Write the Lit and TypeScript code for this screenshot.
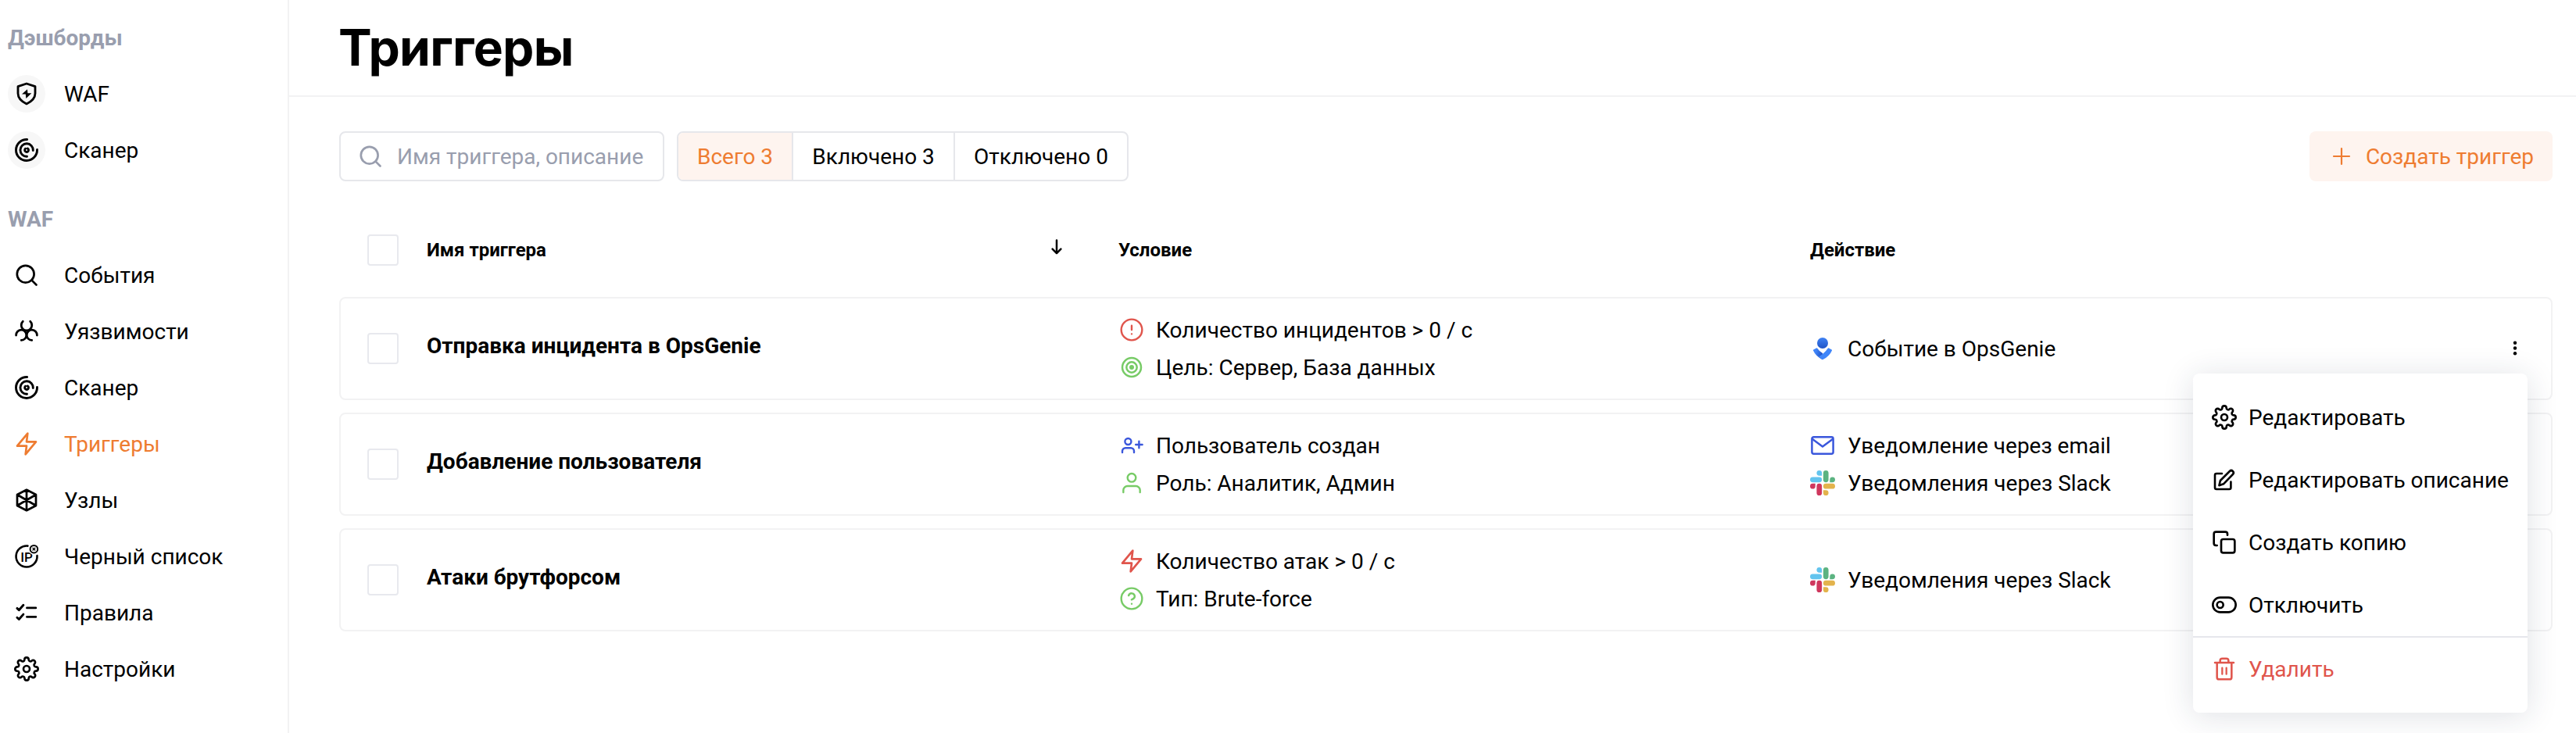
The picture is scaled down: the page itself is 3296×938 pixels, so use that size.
import { LitElement, html, css, svg } from "lit";
import { customElement, property } from "lit/decorators.js";

const FEATHER = "scale(1.3333)";

const ICONS: Record<string, unknown> = {
  shield: svg`<g stroke-width="2.8"><path d="M16 3 27 6.7V15.5c0 6.8-5 10.6-11 13.4C10 26.100 5 22.300 5 15.500V6.700Z"/><path d="M17 10.200 10 16.500h4.800L15.400 22l6.900-6.700h-4.900Z" fill="currentColor" stroke="none"/></g>`,
  scanner: svg`<g stroke-width="2.9"><path d="M16.700 2.500A13.500 13.500 0 1 0 29.500 15.500"/><path d="M24.300 16.500A8.200 8.200 0 1 0 16.500 24.200"/><path d="M14.600 14.200A2.400 2.400 0 1 0 17.300 14"/></g>`,
  search: svg`<g stroke-width="2.7"><circle cx="14.700" cy="14.700" r="10.900"/><path d="M22.600 22.600 28.500 28.500"/></g>`,
  bio: svg`<g stroke-width="2.8"><path d="M11.300 3.300A6.800 6.800 0 1 0 20.700 3.300"/><path d="M2.600 21A6.600 6.600 0 1 1 9.300 27.400"/><path d="M29.400 21A6.600 6.600 0 1 0 22.700 27.400"/></g>`,
  bolt: svg`<g transform=${FEATHER}><path d="M13 2 3 14h9l-1 8 10-12h-9z"/></g>`,
  nodes: svg`<g stroke-width="2.7"><path d="M16 2.800 28 9v14L16 29.200 4 23V9ZM16 2.800v26.400M4 9l24 14M28 9 4 23"/></g>`,
  blacklist: svg`<g stroke-width="2.600"><path d="M17.500 2.600A13.500 13.500 0 1 0 29.500 15"/><text x="8.200" y="22.600" font-size="17" font-weight="500" fill="currentColor" stroke="none" font-family="Roboto, sans-serif">IP</text><circle cx="25.400" cy="6.700" r="7.300" fill="#fff" stroke="none"/><circle cx="25.400" cy="6.700" r="4.800" stroke-width="2"/><path d="M24 5.300l2.800 2.800M26.800 5.300l-2.800 2.800" stroke-width="1.400"/></g>`,
  rules: svg`<g stroke-width="2.900"><path d="M3.900 10.400 6.300 12.700 11.900 6.300M3.900 22.200 6.300 24.500 11.900 18.100M16.500 9.900h11.300M16.500 21.400h11.300"/></g>`,
  gear: svg`<g transform=${FEATHER}><circle cx="12" cy="12" r="3"/><path d="M19.400 15a1.650 1.650 0 0 0 .33 1.820l.06.06a2 2 0 0 1 0 2.830 2 2 0 0 1-2.830 0l-.06-.06a1.650 1.650 0 0 0-1.820-.33 1.650 1.650 0 0 0-1 1.510V21a2 2 0 0 1-2 2 2 2 0 0 1-2-2v-.09A1.650 1.650 0 0 0 9 19.400a1.650 1.650 0 0 0-1.820.33l-.06.06a2 2 0 0 1-2.830 0 2 2 0 0 1 0-2.830l.06-.06a1.650 1.650 0 0 0 .33-1.820 1.650 1.650 0 0 0-1.510-1H3a2 2 0 0 1-2-2 2 2 0 0 1 2-2h.09A1.650 1.650 0 0 0 4.600 9a1.650 1.650 0 0 0-.33-1.820l-.06-.06a2 2 0 0 1 0-2.830 2 2 0 0 1 2.830 0l.06.06a1.650 1.650 0 0 0 1.820.33H9a1.650 1.650 0 0 0 1-1.510V3a2 2 0 0 1 2-2 2 2 0 0 1 2 2v.09a1.650 1.650 0 0 0 1 1.510 1.650 1.650 0 0 0 1.820-.33l.06-.06a2 2 0 0 1 2.830 0 2 2 0 0 1 0 2.830l-.06.06a1.650 1.650 0 0 0-.33 1.820V9a1.650 1.650 0 0 0 1.510 1H21a2 2 0 0 1 2 2 2 2 0 0 1-2 2h-.09a1.650 1.650 0 0 0-1.510 1z"/></g>`,
  plus: svg`<path d="M16 6v20M6 16h20" stroke-width="2.200"/>`,
  arrow: svg`<path d="M16 7.500v16.500M10.600 18.700 16 24.200l5.400-5.500" stroke-width="2.500"/>`,
  kebab: svg`<g fill="currentColor" stroke="none"><circle cx="16" cy="8.800" r="2.200"/><circle cx="16" cy="15.500" r="2.200"/><circle cx="16" cy="22.200" r="2.200"/></g>`,
  alert: svg`<g transform=${FEATHER} stroke-width="1.800"><circle cx="12" cy="12" r="10"/><path d="M12 8v4M12 16h.01"/></g>`,
  target: svg`<g stroke-width="2.500"><circle cx="16" cy="16" r="12"/><circle cx="16" cy="16" r="6.700"/><circle cx="16" cy="16" r="3" fill="currentColor" stroke="none"/></g>`,
  userPlus: svg`<g stroke-width="2.400"><circle cx="11.400" cy="11" r="4"/><path d="M4 25v-1.700a4 4 0 0 1 4-4h7a4 4 0 0 1 4 4V25M25.400 10.800v8.400M21.200 15h8.400"/></g>`,
  user: svg`<g transform=${FEATHER} stroke-width="1.800"><path d="M20 21v-2a4 4 0 0 0-4-4H8a4 4 0 0 0-4 4v2"/><circle cx="12" cy="7" r="4"/></g>`,
  help: svg`<g transform=${FEATHER} stroke-width="1.800"><circle cx="12" cy="12" r="10"/><path d="M9.090 9a3 3 0 0 1 5.830 1c0 2-3 3-3 3M12 17h.01"/></g>`,
  mail: svg`<g stroke-width="2.500"><rect x="2.400" y="5.200" width="27.200" height="21.600" rx="2.200"/><path d="M3.200 8 16 17.500 28.800 8"/></g>`,
  opsgenie: svg`<defs><linearGradient id="ogHead" x1="0" y1="0" x2="0" y2="1"><stop offset="0" stop-color="#3f82f4"/><stop offset="1" stop-color="#2054c6"/></linearGradient><linearGradient id="ogBody" x1="1" y1=".7" x2="0" y2=".3"><stop offset=".1" stop-color="#2154c8"/><stop offset=".75" stop-color="#3f84f8"/></linearGradient></defs><g stroke="none"><circle cx="16" cy="9" r="7" fill="url(#ogHead)"/><path d="M4.300 17.400 8 15.400Q8.800 15 9.300 15.800 11.800 19.700 16 22V30.200Q7 25.500 4 18.400 3.800 17.700 4.300 17.400Z" fill="url(#ogBody)"/><path d="M27.700 17.400 24 15.400Q23.200 15 22.700 15.800 19 21.400 11.200 26.600 13 28.600 15.400 30 16 30.300 16.600 30 25 25.500 28 18.400 28.200 17.700 27.700 17.400Z" fill="#4086f9"/></g>`,
  slack: svg`<g transform=${FEATHER} stroke="none"><path fill="#cf375d" d="M5.042 15.165a2.528 2.528 0 0 1-2.520 2.523A2.528 2.528 0 0 1 0 15.165a2.527 2.527 0 0 1 2.522-2.520h2.520v2.520zM6.313 15.165a2.527 2.527 0 0 1 2.521-2.520 2.527 2.527 0 0 1 2.521 2.520v6.313A2.528 2.528 0 0 1 8.834 24a2.528 2.528 0 0 1-2.521-2.522v-6.313z"/><path fill="#63c4ee" d="M8.834 5.042a2.528 2.528 0 0 1-2.521-2.520A2.528 2.528 0 0 1 8.834 0a2.528 2.528 0 0 1 2.521 2.522v2.520H8.834zM8.834 6.313a2.528 2.528 0 0 1 2.521 2.521 2.528 2.528 0 0 1-2.521 2.521H2.522A2.528 2.528 0 0 1 0 8.834a2.528 2.528 0 0 1 2.522-2.521h6.312z"/><path fill="#5bb381" d="M18.956 8.834a2.528 2.528 0 0 1 2.522-2.521A2.528 2.528 0 0 1 24 8.834a2.528 2.528 0 0 1-2.522 2.521h-2.522V8.834zM17.688 8.834a2.528 2.528 0 0 1-2.523 2.521 2.527 2.527 0 0 1-2.520-2.521V2.522A2.527 2.527 0 0 1 15.165 0a2.528 2.528 0 0 1 2.523 2.522v6.312z"/><path fill="#e3b34c" d="M15.165 18.956a2.528 2.528 0 0 1 2.523 2.522A2.528 2.528 0 0 1 15.165 24a2.527 2.527 0 0 1-2.520-2.522v-2.522h2.520zM15.165 17.688a2.527 2.527 0 0 1-2.520-2.523 2.526 2.526 0 0 1 2.520-2.520h6.313A2.527 2.527 0 0 1 24 15.165a2.528 2.528 0 0 1-2.522 2.523h-6.313z"/></g>`,
  edit: svg`<g stroke-width="2.600"><path d="M13 8H6a2 2 0 0 0-2 2v16a2 2 0 0 0 2 2h16.400a2 2 0 0 0 2-2v-7.500"/><path d="M9.400 23.200l1.500-6.200L22.900 5a2.800 2.800 0 0 1 4 4L15 21.300Z"/></g>`,
  copy: svg`<g transform=${FEATHER}><rect x="9" y="9" width="13" height="13" rx="2"/><path d="M5 15H4a2 2 0 0 1-2-2V4a2 2 0 0 1 2-2h9a2 2 0 0 1 2 2v1"/></g>`,
  toggle: svg`<g transform=${FEATHER}><rect x="1" y="5" width="22" height="14" rx="7"/><circle cx="8" cy="12" r="3"/></g>`,
  trash: svg`<g transform=${FEATHER}><path d="M3 6h18M19 6v14a2 2 0 0 1-2 2H7a2 2 0 0 1-2-2V6m3 0V4a2 2 0 0 1 2-2h4a2 2 0 0 1 2 2v2" stroke-width="1.900"/><path d="M10 11v6M14 11v6" stroke-width="1.700"/></g>`,
};

@customElement("ui-icon")
class UiIcon extends LitElement {
  @property() name = "";
  static styles = css`
    :host { display: block; flex: none; width: 32px; height: 32px; }
    .glyph { display: block; width: 32px; height: 32px; overflow: visible; }
  `;
  render() {
    return html`<svg class="glyph" viewBox="0 0 32 32" fill="none" stroke="currentColor"
      stroke-width="2" stroke-linecap="round" stroke-linejoin="round">${ICONS[this.name]}</svg>`;
  }
}

interface Line { icon: string; tone: string; text: string; }
interface Trigger { name: string; when: Line[]; then: Line[]; menu?: boolean; }

const NAV = [
  { title: "Дэшборды", round: true, items: [["shield", "WAF"], ["scanner", "Сканер"]] },
  {
    title: "WAF", round: false, items: [
      ["search", "События"], ["bio", "Уязвимости"], ["scanner", "Сканер"], ["bolt", "Триггеры"],
      ["nodes", "Узлы"], ["blacklist", "Черный список"], ["rules", "Правила"], ["gear", "Настройки"],
    ],
  },
];

const TRIGGERS: Trigger[] = [
  {
    name: "Отправка инцидента в OpsGenie",
    when: [{ icon: "alert", tone: "red", text: "Количество инцидентов > 0 / с" }, { icon: "target", tone: "green", text: "Цель: Сервер, База данных" }],
    then: [{ icon: "opsgenie", tone: "", text: "Событие в OpsGenie" }],
    menu: true,
  },
  {
    name: "Добавление пользователя",
    when: [{ icon: "userPlus", tone: "blue", text: "Пользователь создан" }, { icon: "user", tone: "green", text: "Роль: Аналитик, Админ" }],
    then: [{ icon: "mail", tone: "blue", text: "Уведомление через email" }, { icon: "slack", tone: "", text: "Уведомления через Slack" }],
  },
  {
    name: "Атаки брутфорсом",
    when: [{ icon: "bolt", tone: "red", text: "Количество атак > 0 / с" }, { icon: "help", tone: "green", text: "Тип: Brute-force" }],
    then: [{ icon: "slack", tone: "", text: "Уведомления через Slack" }],
  },
];

const MENU = [
  ["gear", "Редактировать"], ["edit", "Редактировать описание"], ["copy", "Создать копию"], ["toggle", "Отключить"],
];

@customElement("app-root")
class AppRoot extends LitElement {
  static styles = css`
    :host { display: flex; height: 938px; overflow: hidden; background: #fff; color: #000;
      font: 400 28px/40px Roboto, sans-serif; white-space: nowrap; }
    * { box-sizing: border-box; }
    .side { flex: none; width: 370px; padding: 12px 0 0 10px; border-right: 2px solid #f2f2f3; display: flex; flex-direction: column; gap: 16px; }
    .group { display: flex; flex-direction: column; }
    .caption, .link { display: flex; align-items: center; height: 72px; }
    .caption { padding-top: 2px; font-weight: 700; color: #999eae; }
    .link { gap: 24px; }
    .link.active { color: #ee7c31; }
    .label { padding-top: 2px; }
    .badge { display: grid; place-items: center; width: 48px; height: 48px; border-radius: 50%; }
    .badge.round { background: #f7f7f7; }
    .main { flex: 1; min-width: 0; display: flex; flex-direction: column; }
    .head { height: 124px; padding: 21px 64px 0 63px; border-bottom: 2px solid #f2f2f3; }
    .title { margin: 0; font-family: Inter, sans-serif; font-size: 64px; line-height: 80px; font-weight: 700; letter-spacing: -.7px; }
    .body { padding: 44px 30px 0 64px; display: flex; flex-direction: column; }
    .bar { display: flex; align-items: stretch; height: 64px; gap: 16px; }
    .search { display: flex; align-items: center; gap: 18px; width: 416px; padding-left: 22px; border: 2px solid #e6e7eb; border-radius: 8px; color: #999eae; }
    .tabs { display: flex; border: 2px solid #e6e7eb; border-radius: 8px; overflow: hidden; }
    .tab { display: flex; align-items: center; padding: 2px 24.25px 0 24px; }
    .tab + .tab { border-left: 2px solid #e6e7eb; }
    .tab.on { background: #fef4ef; color: #ee7c31; }
    .create { margin-left: auto; display: flex; align-items: center; gap: 15px; padding: 0 24px 0 25px; border-radius: 8px; background: #fef4ef; color: #ee7c31; }
    .columns, .row { display: grid; grid-template-columns: 76px 885px 885px 1fr 32px; align-items: center; border: 2px solid transparent; padding: 0 30px 0 34px; }
    .columns { height: 96px; margin: 40px 0 12px; font-size: 24px; font-weight: 700; }
    .sort { display: flex; align-items: center; justify-content: space-between; padding-right: 63px; }
    .sort ui-icon { margin-bottom: 8px; }
    .check { width: 40px; height: 40px; border: 2px solid #e8e9ee; border-radius: 4px; background: #fff; }
    .rows { display: flex; flex-direction: column; gap: 16px; }
    .row { height: 132px; border-color: #f2f2f3; border-radius: 8px; position: relative; }
    .name { font-weight: 700; padding-bottom: 6px; }
    .line { display: flex; align-items: center; gap: 16px; height: 48px; }
    .when .line { padding-left: 1px; gap: 15px; }
    .red { color: #e0554c; }
    .green { color: #77cb66; }
    .blue { color: #3a57dc; }
    .menu { position: absolute; z-index: 2; top: 96px; right: 30px; width: 428px; padding: 16px 0; border-radius: 8px; background: #fff; box-shadow: 0 4px 40px rgba(30, 40, 70, .14); }
    .option { display: flex; align-items: center; gap: 15px; height: 80px; padding: 0 24px; }
    .option.danger { height: 82px; border-top: 2px solid #e6e7ec; color: #e0554c; }
  `;

  private line(l: Line) {
    return html`<div class="line"><ui-icon class=${l.tone} name=${l.icon}></ui-icon><span class="label">${l.text}</span></div>`;
  }

  private menu() {
    return html`<div class="menu">
      ${MENU.map(([icon, text]) => html`<div class="option"><ui-icon name=${icon}></ui-icon><span class="label">${text}</span></div>`)}
      <div class="option danger"><ui-icon name="trash"></ui-icon><span class="label">Удалить</span></div>
    </div>`;
  }

  render() {
    return html`
      <nav class="side">
        ${NAV.map((g) => html`<div class="group">
          <div class="caption">${g.title}</div>
          ${g.items.map(([icon, text]) => html`<div class="link ${text === "Триггеры" ? "active" : ""}">
            <span class="badge ${g.round ? "round" : ""}"><ui-icon name=${icon}></ui-icon></span><span class="label">${text}</span>
          </div>`)}
        </div>`)}
      </nav>
      <main class="main">
        <header class="head"><h1 class="title">Триггеры</h1></header>
        <section class="body">
          <div class="bar">
            <div class="search"><ui-icon name="search"></ui-icon><span class="label">Имя триггера, описание</span></div>
            <div class="tabs"><div class="tab on">Всего 3</div><div class="tab">Включено 3</div><div class="tab">Отключено 0</div></div>
            <div class="create"><ui-icon name="plus"></ui-icon><span class="label">Создать триггер</span></div>
          </div>
          <div class="columns">
            <span class="check"></span>
            <span class="sort">Имя триггера<ui-icon name="arrow"></ui-icon></span>
            <span>Условие</span><span>Действие</span>
          </div>
          <div class="rows">
            ${TRIGGERS.map((t) => html`<div class="row">
              <span class="check"></span>
              <span class="name">${t.name}</span>
              <div class="when">${t.when.map((l) => this.line(l))}</div>
              <div>${t.then.map((l) => this.line(l))}</div>
              ${t.menu ? html`<ui-icon name="kebab"></ui-icon>${this.menu()}` : ""}
            </div>`)}
          </div>
        </section>
      </main>`;
  }
}
